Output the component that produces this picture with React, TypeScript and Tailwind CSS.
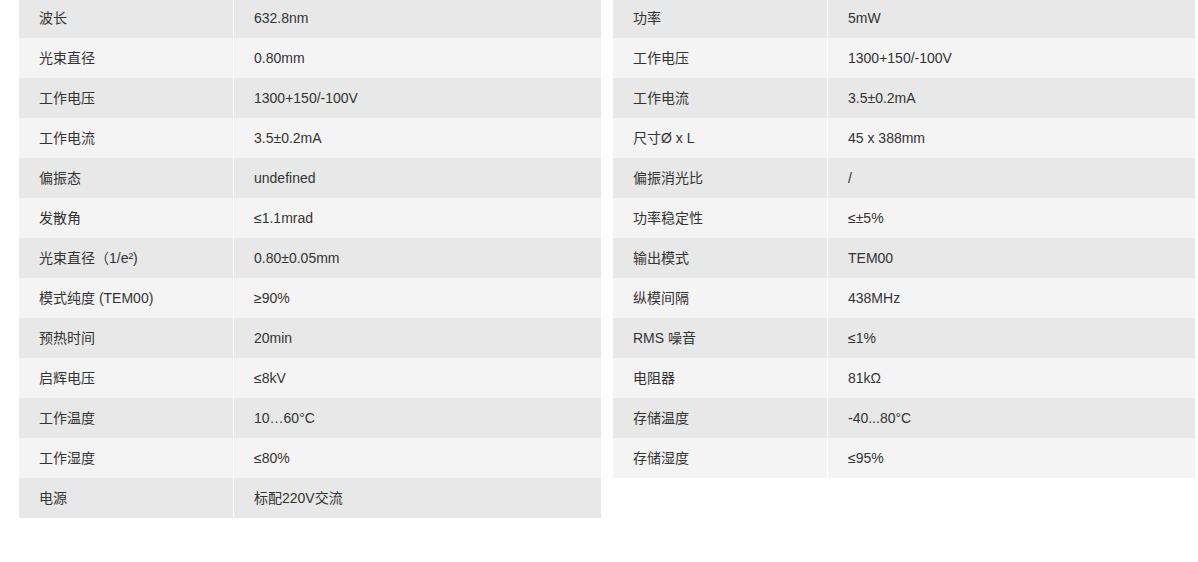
const left: [string, string][] = [
  ["波长", "632.8nm"],
  ["光束直径", "0.80mm"],
  ["工作电压", "1300+150/-100V"],
  ["工作电流", "3.5±0.2mA"],
  ["偏振态", "undefined"],
  ["发散角", "≤1.1mrad"],
  ["光束直径（1/e²)", "0.80±0.05mm"],
  ["模式纯度 (TEM00)", "≥90%"],
  ["预热时间", "20min"],
  ["启辉电压", "≤8kV"],
  ["工作温度", "10…60°C"],
  ["工作湿度", "≤80%"],
  ["电源", "标配220V交流"],
];

const right: [string, string][] = [
  ["功率", "5mW"],
  ["工作电压", "1300+150/-100V"],
  ["工作电流", "3.5±0.2mA"],
  ["尺寸Ø x L", "45 x 388mm"],
  ["偏振消光比", "/"],
  ["功率稳定性", "≤±5%"],
  ["输出模式", "TEM00"],
  ["纵模间隔", "438MHz"],
  ["RMS 噪音", "≤1%"],
  ["电阻器", "81kΩ"],
  ["存储温度", "-40...80°C"],
  ["存储湿度", "≤95%"],
];

function SpecTable({ rows }: { rows: [string, string][] }) {
  return (
    <div className="flex w-[582px] flex-col">
      {rows.map(([k, v], i) => (
        <div
          key={k}
          className={`flex h-[40px] items-center ${i % 2 === 0 ? "bg-[#e8e8e8]" : "bg-[#f5f4f5]"}`}
        >
          <div className="flex h-full w-[215px] items-center border-r border-white pl-5">{k}</div>
          <div className="flex h-full flex-1 items-center pl-5">{v}</div>
        </div>
      ))}
    </div>
  );
}

export default function App() {
  return (
    <div
      className="h-[562px] w-[1198px] overflow-hidden bg-white text-[14px] text-[#333]"
      style={{ fontFamily: '"Liberation Sans", "Noto Sans CJK SC", sans-serif' }}
    >
      <div className="mt-[-2px] flex items-start gap-[12px] pl-[19px]">
        <SpecTable rows={left} />
        <SpecTable rows={right} />
      </div>
    </div>
  );
}
